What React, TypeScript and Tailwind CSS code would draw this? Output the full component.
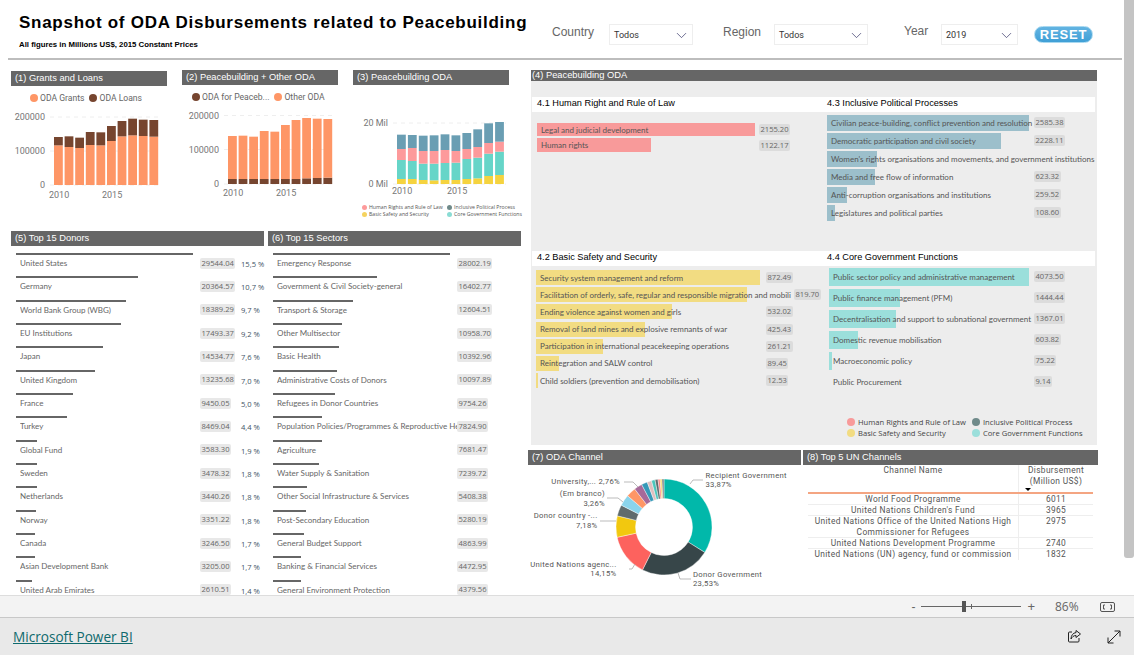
import { ChevronDown } from 'lucide-react'

const sans = 'font-["Liberation_Sans",Arial,sans-serif]'
const soft = 'font-["Open_Sans",sans-serif]'
const lato = 'font-["Lato",sans-serif]'
const din = 'font-["Roboto",sans-serif]'

const donors = [
  ['United States', '29544.04', '15,5 %'],
  ['Germany', '20364.57', '10,7 %'],
  ['World Bank Group (WBG)', '18389.29', '9,7 %'],
  ['EU Institutions', '17493.37', '9,2 %'],
  ['Japan', '14534.77', '7,6 %'],
  ['United Kingdom', '13235.68', '7,0 %'],
  ['France', '9450.05', '5,0 %'],
  ['Turkey', '8469.04', '4,4 %'],
  ['Global Fund', '3583.30', '1,9 %'],
  ['Sweden', '3478.32', '1,8 %'],
  ['Netherlands', '3440.26', '1,8 %'],
  ['Norway', '3351.22', '1,8 %'],
  ['Canada', '3246.50', '1,7 %'],
  ['Asian Development Bank', '3205.00', '1,7 %'],
  ['United Arab Emirates', '2610.51', '1,4 %'],
]

const sectors = [
  ['Emergency Response', '28002.19'],
  ['Government & Civil Society-general', '16402.77'],
  ['Transport & Storage', '12604.51'],
  ['Other Multisector', '10958.70'],
  ['Basic Health', '10392.96'],
  ['Administrative Costs of Donors', '10097.89'],
  ['Refugees in Donor Countries', '9754.26'],
  ['Population Policies/Programmes & Reproductive He', '7824.90'],
  ['Agriculture', '7681.47'],
  ['Water Supply & Sanitation', '7239.72'],
  ['Other Social Infrastructure & Services', '5408.38'],
  ['Post-Secondary Education', '5280.19'],
  ['General Budget Support', '4863.99'],
  ['Banking & Financial Services', '4472.95'],
  ['General Environment Protection', '4379.56'],
]

const pie = [
  [33.87, '#01B8AA'],
  [23.53, '#374649'],
  [14.15, '#FD625E'],
  [7.18, '#F2C80F'],
  [3.8, '#5F6B6D'],
  [3.76, '#8AD4EB'],
  [3.26, '#FE9666'],
  [2.76, '#A66999'],
  [2, '#3599B8'],
  [1.5, '#DFBFBF'],
  [1.2, '#4AC5BB'],
  [1, '#5F6B6D'],
  [0.7, '#FB8281'],
  [0.6, '#F4D25A'],
  [0.7, '#7F898A'],
] as [number, string][]

function Title({ children }: { children: string }) {
  return (
    <div className={`h-[15px] bg-[#666666] text-white text-[9.3px] leading-[15px] pl-[4px] whitespace-nowrap ${sans}`}>
      {children}
    </div>
  )
}

function Dropdown({ value, className }: { value: string; className: string }) {
  return (
    <div className={`h-[21px] border border-[#eeeeee] flex items-center justify-between pl-[4px] pr-[2px] ${className}`}>
      <span className={`text-[9px] pt-[2px] text-[#333] ${din}`}>{value}</span>
      <ChevronDown size={17} strokeWidth={1} className="text-[#336] mt-[2px]" />
    </div>
  )
}

function Dot({ color, size = 8, className = '' }: { color: string; size?: number; className?: string }) {
  return <span className={`rounded-full shrink-0 ${className}`} style={{ background: color, width: size, height: size }} />
}

function StackChart({ x0, pitch, bw, base, stacks, colors, left, ticks, xl, h = 90 }: {
  x0: number; pitch: number; bw: number; base: number; stacks: number[][]; colors: string[]; left: number
  ticks: [string, number][]; xl: [number, number, number]; h?: number
}) {
  return (
    <svg width="156" height={h} className="overflow-visible block">
      {ticks.map(([t, y]) => (
        <g key={t}>
          <line x1={x0 - 4} x2={x0 + pitch * 10} y1={y} y2={y} stroke="#eeeeee" strokeDasharray="4 4" />
          <text x={left} y={y + 3} textAnchor="end" fontSize="9" fill="#777777" fontFamily="Roboto">{t}</text>
        </g>
      ))}
      {stacks.map((tops, i) =>
        tops.map((top, j) => {
          const bottom = j === 0 ? base : tops[j - 1]
          return <rect key={j} x={x0 + i * pitch} y={top} width={bw} height={bottom - top} fill={colors[j]} />
        })
      )}
      <text x={xl[0]} y={xl[2]} fontSize="9" fill="#777777" fontFamily="Roboto">2010</text>
      <text x={xl[1]} y={xl[2]} fontSize="9" fill="#777777" fontFamily="Roboto">2015</text>
    </svg>
  )
}

function RankList({ rows, max, pct }: { rows: string[][]; max: number; pct?: boolean }) {
  return (
    <div className="pt-[7px] pl-[5px]">
      {rows.map((r) => (
        <div key={r[0]} className="h-[23.35px]">
          <div className="h-[2px] bg-[#666666]" style={{ width: (parseFloat(r[1]) / max) * 177 }} />
          <div className="flex items-center h-[12px] mt-[2px] pl-[4px]">
            <span className={`w-[180px] overflow-hidden whitespace-nowrap text-[8px] text-[#666666] ${lato}`}>{r[0]}</span>
            <Badge value={r[1]} />
            {pct && <span className={`absolute ml-[221px] mt-[3px] text-[7.6px] text-[#445566] whitespace-nowrap ${soft}`}>{r[2]}</span>}
          </div>
        </div>
      ))}
    </div>
  )
}

function Badge({ value, dark }: { value: string; dark?: boolean }) {
  return <span className={`${dark ? 'bg-[#dcdcdc]' : 'bg-[#e8e8e8]'} rounded-[2px] px-[1.5px] leading-[11px] text-[7.6px] text-[#666666] ${soft}`}>{value}</span>
}

function BarRow({ label, value, bar, color, col, h }: { label: string; value?: string; bar: number; color: string; col: number; h: number }) {
  return (
    <div className="relative flex items-center" style={{ height: h }}>
      <div className="absolute left-0 top-0 bottom-0" style={{ width: bar, background: color }} />
      <span className={`relative pl-[4px] overflow-hidden whitespace-nowrap text-[8px] text-[#555555] ${lato}`} style={{ width: value ? col : 268 }}>{label}</span>
      {value && <span className="relative flex"><Badge value={value} dark /></span>}
    </div>
  )
}

function Subhead({ children }: { children: string }) {
  return <div className={`h-[15px] bg-white text-black text-[9.2px] leading-[12px] pl-[5px] ${sans}`}>{children}</div>
}

function arc(start: number, end: number) {
  const cx = 136, cy = 62, R = 48, r = 28.5
  const p = (pc: number, rad: number) => {
    const a = (pc / 100) * Math.PI * 2 - Math.PI / 2
    return `${(cx + rad * Math.cos(a)).toFixed(2)} ${(cy + rad * Math.sin(a)).toFixed(2)}`
  }
  const large = end - start > 50 ? 1 : 0
  return `M${p(start, R)} A${R} ${R} 0 ${large} 1 ${p(end, R)} L${p(end, r)} A${r} ${r} 0 ${large} 0 ${p(start, r)} Z`
}

function Donut() {
  let acc = 0
  const labels: [number, number, string, string][] = [
    [177.5, 10, 'Recipient Government', 'start'],
    [177.5, 19, '33,87%', 'start'],
    [165, 109, 'Donor Government', 'start'],
    [165, 118, '23,53%', 'start'],
    [88.5, 99, 'United Nations agenc...', 'end'],
    [88.5, 108, '14,15%', 'end'],
    [69.5, 50, 'Donor country -...', 'end'],
    [69.5, 60, '7,18%', 'end'],
    [77, 28, '(Em branco)', 'end'],
    [77, 38, '3,26%', 'end'],
    [92, 16, 'University,... 2,76%', 'end'],
  ]
  const lines = ['162,19 165,15 175,15', '150,108 152,114 163,114', '101,104 104,104 107,99', '72,56 88,56', '79,33 90,33 95,37', '96,17 105,17 110,22']
  return (
    <svg width="274" height="130" className="block">
      {pie.map(([v, c]) => {
        const d = arc(acc, acc + v)
        acc += v
        return <path key={c + v} d={d} fill={c} stroke="#ffffff" strokeWidth="0.4" />
      })}
      {lines.map((l) => <polyline key={l} points={l} fill="none" stroke="#aaaaaa" strokeWidth="0.8" />)}
      {labels.map(([x, y, t, a]) => (
        <text key={t} x={x} y={y + 3} textAnchor={a as 'start' | 'end'} fontSize="7.7" letterSpacing="0.3" fill="#555555" fontFamily="Roboto">{t}</text>
      ))}
    </svg>
  )
}

const unRows = [
  ['World Food Programme', '6011'],
  ['United Nations Children\'s Fund', '3965'],
  ['United Nations Office of the United Nations High Commissioner for Refugees', '2975'],
  ['United Nations Development Programme', '2740'],
  ['United Nations (UN) agency, fund or commission', '1832'],
]

export default function App() {
  return (
    <div className="w-[1134px] h-[655px] flex flex-col overflow-hidden bg-white">
      <div className="h-[595px] flex overflow-hidden">
        <div className="w-[1124px]">
          {/* Header */}
          <div className="ml-[8px] w-[1114px] h-[60px] border-b-2 border-[#bdbdbd] flex">
            <div className="w-[544px] pl-[11px] pt-[13px]">
              <div className={`text-[17px] leading-[20px] font-bold text-black tracking-[0.73px] whitespace-nowrap ${sans}`}>Snapshot of ODA Disbursements related to Peacebuilding</div>
              <div className={`mt-[7px] text-[7.8px] leading-[10px] font-bold text-black ${sans}`}>All figures in Millions US$, 2015 Constant Prices</div>
            </div>
            <div className={`flex items-start pt-[24px] text-[12px] text-[#666666] ${sans}`}>
              <span className="w-[57px] -mt-px">Country</span>
              <Dropdown value="Todos" className="w-[84px]" />
              <span className="ml-[30px] w-[51px] -mt-px">Region</span>
              <Dropdown value="Todos" className="w-[94px]" />
              <span className="ml-[36px] w-[37px] -mt-[2px]">Year</span>
              <Dropdown value="2019" className="w-[77px]" />
              <div className="ml-[16px] mt-[2px] w-[59px] h-[17px] rounded-full border border-[#a8d8f0] bg-gradient-to-b from-[#62b4e2] to-[#3f9fd6] text-white font-bold text-[13px] leading-[15px] tracking-[0.8px] text-center">RESET</div>
            </div>
          </div>

          <div className="flex pt-[10px]">
            {/* Left block */}
            <div className="w-[528px]">
              <div className="h-[161px] flex gap-[15px] pl-[11px]">
                <div className="w-[156px] pt-px">
                  <Title>(1) Grants and Loans</Title>
                  <div className={`h-[24px] flex items-center pl-[19px] text-[8.6px] text-[#666666] ${din}`}>
                    <Dot color="#FE9666" /><span className="ml-[2px]">ODA Grants</span>
                    <Dot color="#76452F" className="ml-[5px]" /><span className="ml-[2px]">ODA Loans</span>
                  </div>
                  <StackChart
                    x0={43} pitch={10.6} bw={8.8} base={75} left={34}
                    colors={['#FE9666', '#76452F']}
                    ticks={[['200000', 7], ['100000', 41], ['0', 75]]}
                    xl={[38, 91, 88]}
                    stacks={[[436, 411], [441, 409], [444, 413], [435, 396], [436, 397], [423, 378], [409, 363], [406, 356], [408, 359], [410, 360]].map((s) => s.map((v) => v / 3 - 110))}
                  />
                </div>
                <div className="w-[156px]">
                  <Title>(2) Peacebuilding + Other ODA</Title>
                  <div className={`h-[24px] flex items-center pl-[10px] text-[8.6px] text-[#666666] whitespace-nowrap ${din}`}>
                    <Dot color="#76452F" /><span className="ml-[2px]">ODA for Peaceb...</span>
                    <Dot color="#FE9666" className="ml-[5px]" /><span className="ml-[2px]">Other ODA</span>
                  </div>
                  <StackChart
                    x0={46} pitch={10.6} bw={8.8} base={75} left={37}
                    colors={['#76452F', '#FE9666']}
                    ticks={[['200000', 6.5], ['100000', 40.5], ['0', 75]]}
                    xl={[41, 94, 87]}
                    stacks={[[537, 408], [537, 407], [537, 410], [537, 393], [537, 395], [537, 375], [537, 360], [535, 354], [534, 356], [533, 357]].map((s) => s.map((v) => v / 3 - 109))}
                  />
                </div>
                <div className="w-[156px]">
                  <Title>(3) Peacebuilding ODA</Title>
                  <StackChart
                    h={115} x0={44} pitch={10.9} bw={8.8} base={99} left={35}
                    colors={['#F5D33F', '#66D5C8', '#FD9A9B', '#6A9EB3']}
                    ticks={[['20 Mil', 38], ['0 Mil', 99]]}
                    xl={[39, 94, 109]}
                    stacks={[[237, 180, 147, 104], [237, 183, 144, 105], [240, 191, 153, 107], [241, 191, 153, 106], [240, 189, 150, 103], [240, 188, 153, 106], [237, 177, 147, 99], [235, 173, 141, 88], [228, 161, 129, 70], [225, 155, 125, 66]].map((s) => s.map((v) => v / 3 + 15))}
                  />
                  <div className={`w-[170px] grid grid-cols-[85px_85px] pl-[9px] mt-[4px] text-[5.2px] leading-[7px] text-[#555555] whitespace-nowrap ${soft}`}>
                    <span className="flex items-center gap-[2px]"><Dot color="#FD9A9B" size={5} />Human Rights and Rule of Law</span>
                    <span className="flex items-center gap-[2px]"><Dot color="#6F8A8A" size={5} />Inclusive Political Process</span>
                    <span className="flex items-center gap-[2px]"><Dot color="#F5D35F" size={5} />Basic Safety and Security</span>
                    <span className="flex items-center gap-[2px]"><Dot color="#8ADCD4" size={5} />Core Government Functions</span>
                  </div>
                </div>
              </div>

              <div className="flex gap-[4px] pl-[11px]">
                <div className="w-[253px] relative">
                  <Title>(5) Top 15 Donors</Title>
                  <RankList rows={donors} max={29544} pct />
                </div>
                <div className="w-[253px]">
                  <Title>(6) Top 15 Sectors</Title>
                  <RankList rows={sectors} max={28002} />
                </div>
              </div>
            </div>

            {/* Right block */}
            <div className="w-[571px]">
              <div className="ml-[3px] w-[566px]">
                <div className={`h-[11px] bg-[#666666] text-white text-[9.3px] leading-[11px] pl-[1px] ${sans}`}>(4) Peacebuilding ODA</div>
                <div className="h-[364px] bg-[#ededed] pt-[16px] pl-px">
                  <div className="h-[154px] flex">
                    <div className="w-[290px]">
                      <Subhead>4.1 Human Right and Rule of Law</Subhead>
                      <div className="mt-[11px] pl-[5px] flex flex-col gap-[2px]">
                        <BarRow label="Legal and judicial development" value="2155.20" bar={218} color="#F89A9A" col={222} h={13} />
                        <BarRow label="Human rights" value="1122.17" bar={113.5} color="#F89A9A" col={222} h={14} />
                      </div>
                    </div>
                    <div className="w-[273px]">
                      <Subhead>4.3 Inclusive Political Processes</Subhead>
                      <div className="mt-[3px] pl-[5px] flex flex-col gap-[2.5px]">
                        <BarRow label="Civilian peace-building, conflict prevention and resolution" value="2585.38" bar={202} color="#9CBFCB" col={207} h={15.5} />
                        <BarRow label="Democratic participation and civil society" value="2228.11" bar={174} color="#9CBFCB" col={207} h={15.5} />
                        <BarRow label="Women's rights organisations and movements, and government institutions" bar={50} color="#9CBFCB" col={207} h={15.5} />
                        <BarRow label="Media and free flow of information" value="623.32" bar={48} color="#9CBFCB" col={207} h={15.5} />
                        <BarRow label="Anti-corruption organisations and institutions" value="259.52" bar={20} color="#9CBFCB" col={207} h={15.5} />
                        <BarRow label="Legislatures and political parties" value="108.60" bar={8} color="#9CBFCB" col={207} h={15.5} />
                      </div>
                    </div>
                  </div>
                  <div className="flex">
                    <div className="w-[290px]">
                      <Subhead>4.2 Basic Safety and Security</Subhead>
                      <div className="mt-[4px] pl-[4px] flex flex-col gap-[2.2px]">
                        <BarRow label="Security system management and reform" value="872.49" bar={224} color="#F2DC82" col={230} h={15} />
                        <BarRow label="Facilitation of orderly, safe, regular and responsible migration and mobili" value="819.70" bar={210.5} color="#F2DC82" col={258} h={15} />
                        <BarRow label="Ending violence against women and girls" value="532.02" bar={136} color="#F2DC82" col={230} h={15} />
                        <BarRow label="Removal of land mines and explosive remnants of war" value="425.43" bar={109} color="#F2DC82" col={230} h={15} />
                        <BarRow label="Participation in international peacekeeping operations" value="261.21" bar={67} color="#F2DC82" col={230} h={15} />
                        <BarRow label="Reintegration and SALW control" value="89.45" bar={22.5} color="#F2DC82" col={230} h={15} />
                        <BarRow label="Child soldiers (prevention and demobilisation)" value="12.53" bar={2} color="#F2DC82" col={230} h={15} />
                      </div>
                    </div>
                    <div className="w-[273px]">
                      <Subhead>4.4 Core Government Functions</Subhead>
                      <div className="mt-[2px] pl-[7px] flex flex-col gap-[3.5px]">
                        <BarRow label="Public sector policy and administrative management" value="4073.50" bar={200} color="#9BDFDB" col={205} h={17.5} />
                        <BarRow label="Public finance management (PFM)" value="1444.44" bar={70.5} color="#9BDFDB" col={205} h={17.5} />
                        <BarRow label="Decentralisation and support to subnational government" value="1367.01" bar={67} color="#9BDFDB" col={205} h={17.5} />
                        <BarRow label="Domestic revenue mobilisation" value="603.82" bar={29} color="#9BDFDB" col={205} h={17.5} />
                        <BarRow label="Macroeconomic policy" value="75.22" bar={2.5} color="#9BDFDB" col={205} h={17.5} />
                        <BarRow label="Public Procurement" value="9.14" bar={0} color="#9BDFDB" col={205} h={17.5} />
                      </div>
                      <div className={`mt-[26px] ml-[25px] grid grid-cols-[125px_120px] text-[7.6px] leading-[11px] text-[#444444] whitespace-nowrap ${soft}`}>
                        <span className="flex items-center gap-[3px]"><Dot color="#F89A9A" />Human Rights and Rule of Law</span>
                        <span className="flex items-center gap-[3px]"><Dot color="#6F8A8A" />Inclusive Political Process</span>
                        <span className="flex items-center gap-[3px]"><Dot color="#F2DC82" />Basic Safety and Security</span>
                        <span className="flex items-center gap-[3px]"><Dot color="#9BDFDB" />Core Government Functions</span>
                      </div>
                    </div>
                  </div>
                </div>
              </div>

              <div className="mt-[5px] flex gap-[2px]">
                <div className="w-[273px]">
                  <Title>(7) ODA Channel</Title>
                  <Donut />
                </div>
                <div className="w-[295px]">
                  <Title>(8) Top 5 UN Channels</Title>
                  <div className={`ml-[5px] w-[285px] text-[8.4px] leading-[10px] tracking-[0.35px] text-[#555555] text-center ${din}`}>
                    <div className="grid grid-cols-[210px_75px] h-[29px] border-b-2 border-[#f4a582] leading-[11px]">
                      <div>Channel Name</div>
                      <div className="relative border-l border-[#eeeeee]">
                        Disbursement<br />(Million US$)
                        <span className="absolute left-[6px] top-[23px] w-0 h-0 border-x-[3px] border-x-transparent border-t-[3px] border-t-black" />
                      </div>
                    </div>
                    {unRows.map(([n, v]) => (
                      <div key={n} className={`grid grid-cols-[210px_75px] border-b border-[#eeeeee] last:border-b-0 ${n.length > 60 ? 'h-[22px] leading-[11px]' : 'h-[11px]'}`}>
                        <div>{n}</div>
                        <div className="border-l border-[#eeeeee]">{v}</div>
                      </div>
                    ))}
                  </div>
                </div>
              </div>
            </div>
          </div>
        </div>
        <div className="w-[10px]">
          <div className="h-[558px] bg-[#c4c4c4] rounded-b-[3px]" />
        </div>
      </div>

      {/* Zoom bar */}
      <div className="h-[23px] bg-[#f3f3f3] border-y border-[#dddddd] border-b-[#c8c8c8] flex items-center justify-end pr-[19px] text-[#666666]">
        <span className={`text-[12px] w-[10px] ${sans}`}>-</span>
        <div className="relative w-[100px] h-px bg-[#666666]">
          <span className="absolute left-[41px] -top-[5px] w-[4px] h-[11px] bg-[#555555]" />
          <span className="absolute left-[50px] -top-[2px] w-px h-[5px] bg-[#666666]" />
        </div>
        <span className={`ml-[6px] text-[13px] leading-none ${sans}`}>+</span>
        <span className={`ml-[20px] w-[45px] text-[12px] ${soft}`}>86%</span>
        <svg width="15" height="10" viewBox="0 0 15 10" fill="none" stroke="#555555">
          <rect x="0.5" y="0.5" width="14" height="9" rx="1.5" />
          <path d="M5 3H3.5V7H5M10 3H11.5V7H10" />
        </svg>
      </div>

      {/* Footer */}
      <div className="h-[37px] bg-[#e9e9e9] flex items-center pl-[13px] pr-[13px]">
        <a className={`text-[13.6px] pt-[2px] text-[#0f6a6d] underline ${soft}`} href="#">Microsoft Power BI</a>
        <svg width="15" height="15" viewBox="0 0 15 15" className="ml-auto" fill="none" stroke="#222222" strokeWidth="1">
          <path d="M5 3H2.5A1 1 0 0 0 1.5 4V12A1 1 0 0 0 2.5 13H11A1 1 0 0 0 12 12V9" />
          <path d="M9 1.5L13.5 5L9 8.5V6.5C6.5 6.5 5 8 4 10C4 6.5 6 3.8 9 3.6Z" />
        </svg>
        <svg width="14" height="14" viewBox="0 0 14 14" className="ml-[25px]" fill="none" stroke="#222222" strokeWidth="1">
          <path d="M1 13L13 1M7.5 1H13V6.5M1 7.5V13H6.5" />
        </svg>
      </div>
    </div>
  )
}
